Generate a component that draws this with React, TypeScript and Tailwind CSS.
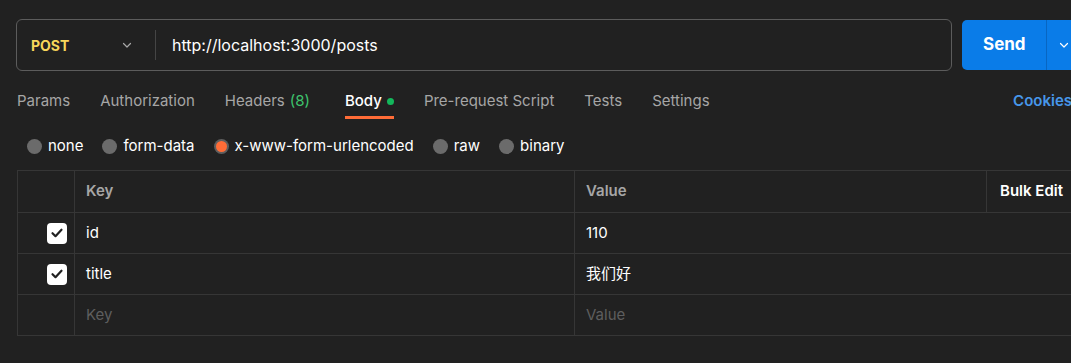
import React from 'react';

const Chevron = ({ className }: { className?: string }) => (
  <svg className={className} width="12" height="12" viewBox="0 0 12 12" fill="none">
    <path d="M2.5 4.5L6 8l3.5-3.5" stroke="currentColor" strokeWidth="1.2" strokeLinecap="round" strokeLinejoin="round" />
  </svg>
);

const Check = () => (
  <div className="w-[20px] h-[21px] rounded-[4px] bg-white flex items-center justify-center">
    <svg width="14" height="14" viewBox="0 0 14 14" fill="none">
      <path d="M2.5 7.2l3 3 6-6.5" stroke="#212121" strokeWidth="2.2" strokeLinecap="round" strokeLinejoin="round" />
    </svg>
  </div>
);

const tabs = [
  { label: 'Params' },
  { label: 'Authorization' },
  { label: 'Headers', count: '(8)' },
  { label: 'Body', active: true },
  { label: 'Pre-request Script' },
  { label: 'Tests' },
  { label: 'Settings' },
];

const radios = [
  { label: 'none' },
  { label: 'form-data' },
  { label: 'x-www-form-urlencoded', on: true },
  { label: 'raw' },
  { label: 'binary' },
];

const rows = [
  { key: 'id', value: '110' },
  { key: 'title', value: '我们好' },
];

const App: React.FC = () => {
  return (
    <div
      className="w-[1071px] h-[363px] overflow-hidden bg-[#212121] text-[15px] text-[#f0f0f0]"
      style={{ fontFamily: 'Inter, "Noto Sans CJK SC", sans-serif' }}
    >
      {/* request bar */}
      <div className="flex items-center pl-[16px] pt-[19px] gap-[10px]">
        <div className="w-[936px] h-[52px] flex items-center border border-[#5c5c5c] rounded-[6px]">
          <div className="w-[138px] flex items-center justify-between pl-[14px] pr-[22px]">
            <span className="font-bold text-[14px] text-[#f8d65b]">POST</span>
            <Chevron className="text-[#a8a8a8]" />
          </div>
          <div className="w-px h-[30px] bg-[#454545]" />
          <span className="pl-[16px] text-[16px] text-white">http://localhost:3000/posts</span>
        </div>
        <div className="flex-1 h-[50px] bg-[#0a7ce8] rounded-l-[5px] flex items-center">
          <span className="w-[84px] pl-[21px] font-bold text-[17px] text-white">Send</span>
          <div className="w-px h-full bg-[#0866c2]" />
          <Chevron className="ml-[11px] text-white" />
        </div>
      </div>

      {/* tabs */}
      <div className="flex items-center h-[49px] pl-[17px] mt-[6px]">
        <div className="flex items-center gap-[30px]">
          {tabs.map((t) => (
            <div key={t.label} className={`relative flex items-center h-[49px] ${t.count ? 'mr-[5px]' : ''}`}>
              <span className={t.active ? 'text-white font-medium' : 'text-[#a6a6a6]'}>{t.label}</span>
              {t.count && <span className="ml-[5px] text-[#3ec46d]">{t.count}</span>}
              {t.active && <span className="ml-[5px] w-[7px] h-[7px] rounded-full bg-[#13b75b]" />}
              {t.active && <span className="absolute left-0 right-0 bottom-[7px] h-[3px] bg-[#ff6c37]" />}
            </div>
          ))}
        </div>
        <span className="ml-auto mr-[-1px] font-semibold text-[#4797ea]">Cookies</span>
      </div>

      {/* body type */}
      <div className="flex items-center h-[50px] pl-[27px] gap-[19px] mt-[-5px]">
        {radios.map((r) => (
          <label key={r.label} className="flex items-center gap-[6px]">
            {r.on ? (
              <span className="w-[15px] h-[15px] rounded-full bg-[#5e5e5e] flex items-center justify-center">
                <span className="w-[11px] h-[11px] rounded-full bg-[#ff6c37]" />
              </span>
            ) : (
              <span className="w-[15px] h-[15px] rounded-full bg-[#6b6b6b]" />
            )}
            <span className="text-white">{r.label}</span>
          </label>
        ))}
      </div>

      {/* table */}
      <div className="ml-[17px] mt-[-1px] w-[1070px] border-t border-l border-[#363636]">
        <div className="flex h-[42px] border-b border-[#363636]">
          <div className="w-[57px] border-r border-[#363636]" />
          <div className="w-[500px] border-r border-[#363636] flex items-center pl-[11px] font-semibold text-[#a6a6a6]">Key</div>
          <div className="w-[412px] border-r border-[#363636] flex items-center pl-[11px] font-semibold text-[#a6a6a6]">Value</div>
          <div className="flex-1 flex items-center pl-[13px] font-semibold text-white">Bulk Edit</div>
        </div>
        {rows.map((r) => (
          <div key={r.key} className="flex h-[41px] border-b border-[#363636]">
            <div className="w-[57px] border-r border-[#363636] flex items-center justify-end pr-[7px]">
              <Check />
            </div>
            <div className="w-[500px] border-r border-[#363636] flex items-center pl-[11px] text-white">{r.key}</div>
            <div className="flex-1 flex items-center pl-[11px] text-white">{r.value}</div>
          </div>
        ))}
        <div className="flex h-[41px] border-b border-[#363636]">
          <div className="w-[57px] border-r border-[#363636]" />
          <div className="w-[500px] border-r border-[#363636] flex items-center pl-[11px] text-[#5e5e5e]">Key</div>
          <div className="flex-1 flex items-center pl-[11px] text-[#5e5e5e]">Value</div>
        </div>
      </div>
    </div>
  );
};

export default App;
